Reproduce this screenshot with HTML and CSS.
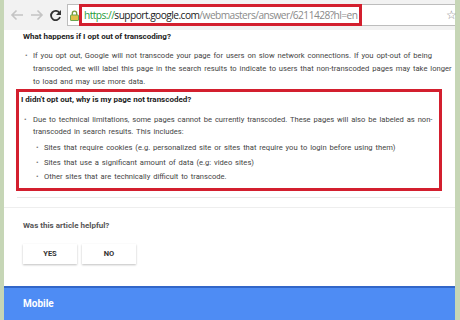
FILE: index.html
```html
<!doctype html>
<html lang="en">
<head>
  <meta charset="utf-8"/>
  <title>Transcoding - Search Console Help</title>
  <link rel="stylesheet" href="styles.css">
</head>
<body>
  <div class="window">

    <header class="toolbar">
      <svg class="nav" width="14" height="12" viewBox="0 0 14 12"><path d="M13 6H2M6.5 1.5 2 6l4.5 4.5"/></svg>
      <svg class="nav" width="14" height="12" viewBox="0 0 14 12"><path d="M1 6h11M7.5 1.5 12 6l-4.5 4.5"/></svg>
      <svg class="nav reload" width="13" height="13" viewBox="0 0 13 13"><path d="M10.6 4.2A4.6 4.6 0 1 0 11 8"/><path class="fill" d="M12 1v5H7z"/></svg>
      <div class="omnibox">
        <svg class="lock" width="9" height="11" viewBox="0 0 9 11"><path class="shackle" d="M2.3 5V3.4a2.2 2.2 0 0 1 4.4 0V5"/><rect x="0.5" y="5" width="8" height="5.5" rx="0.5"/></svg>
        <span class="url"><span class="scheme">https://</span><span class="host">support.google.com</span>/webmasters/answer/6211428?hl=en</span>
        <span class="star">&#9734;</span>
      </div>
    </header>

    <main class="page">
      <section class="faq">
        <h2>What happens if I opt out of transcoding?</h2>
        <ul>
          <li>If you opt out, Google will not transcode your page for users on slow network connections. If you opt-out of being transcoded, we will label this page in the search results to indicate to users that non-transcoded pages may take longer to load and may use more data.</li>
        </ul>
        <div class="highlight">
          <h2>I didn't opt out, why is my page not transcoded?</h2>
          <ul>
            <li>Due to technical limitations, some pages cannot be currently transcoded. These pages will also be labeled as non-transcoded in search results. This includes:
              <ul>
                <li>Sites that require cookies (e.g. personalized site or sites that require you to login before using them)</li>
                <li>Sites that use a significant amount of data (e.g: video sites)</li>
                <li>Other sites that are technically difficult to transcode.</li>
              </ul>
            </li>
          </ul>
        </div>
        <div class="rule"></div>
      </section>

      <section class="feedback">
        <p>Was this article helpful?</p>
        <div class="buttons">
          <button>YES</button>
          <button>NO</button>
        </div>
      </section>

      <footer class="mobile">Mobile</footer>
    </main>

  </div>
</body>
</html>
```

FILE: styles.css
```css
* { margin: 0; padding: 0; box-sizing: border-box; }
html, body { height: 100%; }
body { background-color: #c6d6b6; font-family: Roboto, "Liberation Sans", sans-serif; overflow: hidden; }
.window { margin-left: 4px; width: 451px; height: 320px; display: flex; flex-direction: column; }

.toolbar { height: 30px; background-color: #f2f2f2; display: flex; align-items: center; padding-left: 6px; }
.nav { fill: none; stroke: #c4c4c4; stroke-width: 1.6; margin-right: 6px; }
.nav.reload { stroke: #333; stroke-width: 1.8; margin-left: -1px; margin-right: 4px; }
.nav .fill { fill: #333; stroke: none; }
.omnibox {
  flex: 1; height: 22px; margin-left: 1px;
  display: flex; align-items: stretch;
  background-color: white; border: solid 1px #bdbdbd; border-right: none;
}
.lock { align-self: center; margin-left: 2px; margin-right: 0; fill: #e0c14a; stroke: #6aa84f; stroke-width: 1; }
.lock .shackle { fill: none; stroke: #7a9a3a; stroke-width: 1.3; }
.url {
  margin-top: -1px; margin-bottom: -1px;
  border: solid 3px #d31f2e; padding: 0 2px 0 2px;
  font-family: "Open Sans", sans-serif; font-size: 10.2px; letter-spacing: -0.55px; line-height: 16px; color: #8a8a8a;
  white-space: nowrap;
}
.scheme { color: #1f9c3a; }
.host { color: #222; }
.star { margin-left: auto; color: #8a8a8a; font-size: 12px; line-height: 20px; margin-right: -2px; }

.page { flex: 1; background-color: white; display: flex; flex-direction: column; }
.faq { padding: 1px 0 0 12px; }
h2 { font-size: 8px; line-height: 12px; font-weight: bold; color: #222; padding-left: 7px; }
ul { list-style: none; font-size: 7.6px; word-spacing: 1px; line-height: 13px; color: #444; }
li { position: relative; padding-left: 17px; }
li::before { content: "\2022"; position: absolute; left: 8px; color: #777; }
.faq > ul { margin-top: 6px; }
.faq > ul > li::before { left: 9px; }
.highlight { border: solid 3px #d31f2e; margin: 1px 13px 0 0; padding: 2px 4px 3px 2px; }
.highlight h2 { padding-left: 0; }
.highlight > ul { margin-top: 8px; line-height: 12px; }
.highlight > ul > li { padding-left: 12px; }
.highlight > ul > li::before { left: 3px; }
.highlight ul ul { margin-top: 3px; }
.highlight ul ul li { padding-left: 11px; margin-bottom: 1.5px; }
.highlight ul ul li::before { left: 3px; }
.rule { height: 1px; background-color: #e8e8e8; margin: 6px 15px 0 1px; }

.feedback { padding: 12px 0 22px 19px; border-top: solid 1px #eeeeee; margin-top: 9px; }
.feedback p { font-size: 8px; font-weight: bold; color: #555; line-height: 12px; }
.buttons { display: flex; gap: 5px; margin-top: 12px; }
button {
  width: 54px; height: 20px; border: none; background-color: white;
  box-shadow: 0 1px 2px rgba(0, 0, 0, 0.25);
  font-family: Roboto, sans-serif; font-size: 7.5px; font-weight: bold; color: #333;
}

.mobile {
  flex: 1; background-color: #4e8cf4; border-top: solid 2px #3266c8;
  color: white; font-size: 10px; font-weight: bold; padding: 10px 0 0 19px;
}
```
